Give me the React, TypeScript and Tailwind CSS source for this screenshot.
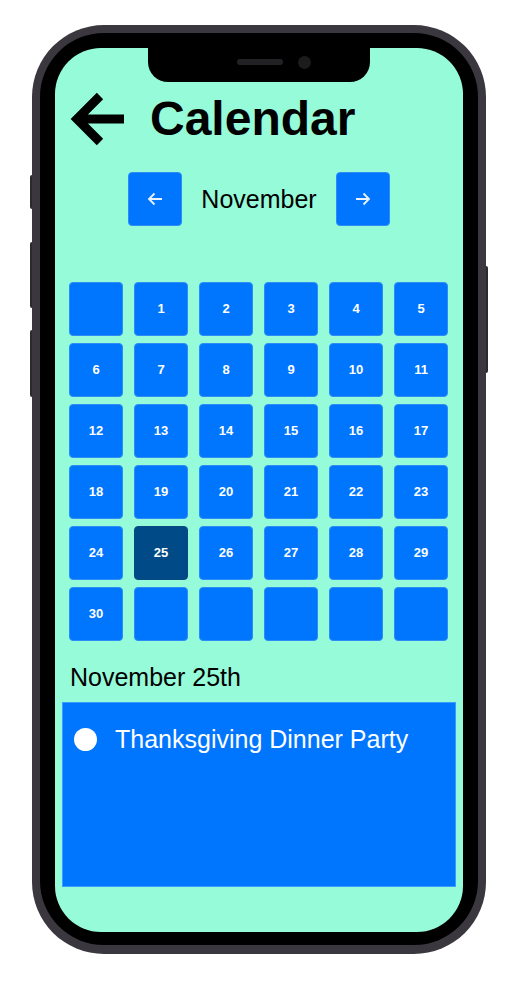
const days: (number | null)[] = [
  null, 1, 2, 3, 4, 5,
  6, 7, 8, 9, 10, 11,
  12, 13, 14, 15, 16, 17,
  18, 19, 20, 21, 22, 23,
  24, 25, 26, 27, 28, 29,
  30, null, null, null, null, null,
]

function SmallArrow({ dir }: { dir: 'left' | 'right' }) {
  return (
    <svg width="16" height="14" viewBox="0 0 16 14" fill="none">
      {dir === 'left' ? (
        <path d="M15 7H2M7.5 1.5L2 7l5.5 5.5" stroke="#eaf3ff" strokeWidth="1.8" />
      ) : (
        <path d="M1 7h13M8.5 1.5L14 7l-5.5 5.5" stroke="#eaf3ff" strokeWidth="1.8" />
      )}
    </svg>
  )
}

function Phone({ children }: { children: React.ReactNode }) {
  return (
    <div className="relative w-[454px] h-[929px]">
      {/* side buttons */}
      <div className="absolute left-[-2px] top-[150px] w-[3px] h-[34px] rounded-l-[2px] bg-[#2b2a2e]" />
      <div className="absolute left-[-2px] top-[217px] w-[3px] h-[66px] rounded-l-[2px] bg-[#2b2a2e]" />
      <div className="absolute left-[-2px] top-[305px] w-[3px] h-[67px] rounded-l-[2px] bg-[#2b2a2e]" />
      <div className="absolute right-[-2px] top-[241px] w-[3px] h-[107px] rounded-r-[2px] bg-[#2b2a2e]" />
      <div className="relative w-full h-full rounded-[72px] bg-[#3a383e] p-[8px] pb-[9px]">
        <div className="w-full h-full rounded-[64px] bg-black p-[15px] pb-[13px]">
          <div className="relative w-[408px] h-[884px] rounded-[46px] bg-[#95fbd8] overflow-hidden">
            {/* notch */}
            <div className="absolute left-[93px] top-0 w-[222px] h-[34px] bg-black rounded-b-[20px]">
              <div className="absolute left-[89px] top-[11px] w-[46px] h-[6px] rounded-full bg-[#222224]" />
              <div className="absolute left-[150px] top-[8px] w-[13px] h-[13px] rounded-full bg-[#1c1c1e]" />
            </div>
            {children}
          </div>
        </div>
      </div>
    </div>
  )
}

export default function App() {
  return (
    <div className="w-[532px] h-[985px] bg-white pt-[25px] pl-[32px] font-['Liberation_Sans',Arial,sans-serif]">
      <Phone>
        <div className="flex flex-col">
          <div className="mt-[43px] pl-[15px] flex items-center h-[56px]">
            <svg width="56" height="56" viewBox="0 0 56 56" fill="none">
              <path d="M7 28H54M30 5L7 28l23 23" stroke="black" strokeWidth="9" />
            </svg>
            <h1 className="ml-[24px] text-[48px] leading-[1.15] font-bold text-black">Calendar</h1>
          </div>

          <div className="mt-[25px] flex items-center justify-center gap-[19px]">
            <button className="w-[54px] h-[54px] rounded-[4px] bg-[#0076ff] border border-[#2f8cf6] flex items-center justify-center">
              <SmallArrow dir="left" />
            </button>
            <p className="text-[25px] leading-[1.15] text-black">November</p>
            <button className="w-[54px] h-[54px] rounded-[4px] bg-[#0076ff] border border-[#2f8cf6] flex items-center justify-center">
              <SmallArrow dir="right" />
            </button>
          </div>

          <div className="mt-[56px] ml-[14px] w-[379px] grid grid-cols-6 gap-x-[11px] gap-y-[7px]">
            {days.map((d, i) => (
              <div
                key={i}
                className={
                  d === 25
                    ? 'h-[54px] rounded-[4px] border border-[#0a4a80] bg-[#004b87] flex items-center justify-center text-white text-[13px] font-bold'
                    : 'h-[54px] rounded-[4px] border border-[#2f8cf6] bg-[#0076ff] flex items-center justify-center text-white text-[13px] font-bold'
                }
              >
                {d}
              </div>
            ))}
          </div>

          <p className="mt-[22px] pl-[15px] text-[25px] leading-[1.15] text-black">November 25th</p>

          <div className="mt-[10px] ml-[7px] w-[394px] h-[185px] bg-[#0076ff] border border-[#3a9cff] pt-[22px] pl-[11px]">
            <div className="flex items-center">
              <span className="w-[23px] h-[23px] rounded-full bg-white" />
              <span className="ml-[18px] text-[25px] leading-[1.15] text-white">Thanksgiving Dinner Party</span>
            </div>
          </div>
        </div>
      </Phone>
    </div>
  )
}
